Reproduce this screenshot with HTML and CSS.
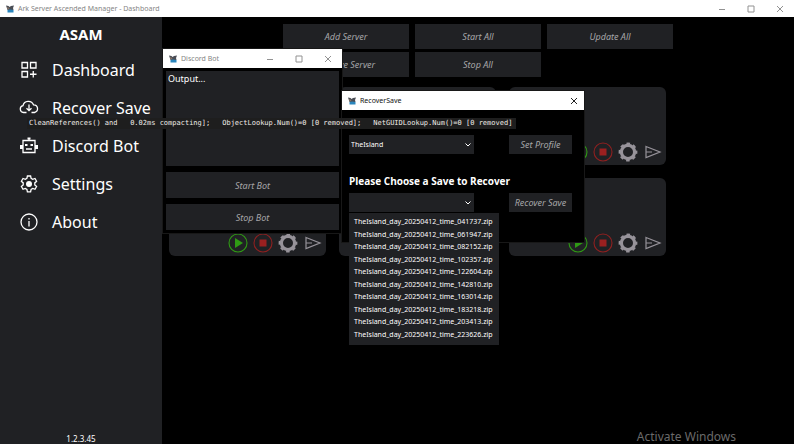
FILE: index.html
```
<!DOCTYPE html>
<html lang="en">
<head>
  <title>Ark Server Ascended Manager - Dashboard</title>
  <meta charset="utf-8">
  <link rel="stylesheet" href="styles.css">
</head>
<body>
  <!-- shared icons -->
  <svg class="sprite" aria-hidden="true">
    <symbol id="logo" viewBox="0 0 16 16">
      <path fill="#4a4d55" d="M0 1l5 1 2 2 3-2 6-1-2 5 1 4H3L2 7z"/>
      <path fill="#8a7668" d="M2 4l5 2-2 3-2-1z"/>
      <path fill="#2b86bd" d="M3 10l5-1 7 1v5H3z"/>
    </symbol>
    <symbol id="win-min" viewBox="0 0 8 8"><path d="M1 4.5h6"/></symbol>
    <symbol id="win-max" viewBox="0 0 8 8"><path d="M1 1h6v6H1z"/></symbol>
    <symbol id="win-close" viewBox="0 0 8 8"><path d="M1 1l6 6M7 1L1 7"/></symbol>
    <symbol id="chevron" viewBox="0 0 8 8"><path d="M1.500 2.500L4 5l2.500-2.500"/></symbol>
    <symbol id="play" viewBox="0 0 20 20">
      <circle cx="10" cy="10" r="9" fill="none" stroke="#2f9a14" stroke-width="1.100"/>
      <path fill="#2f9a14" d="M7 5l8 5-8 5z"/>
    </symbol>
    <symbol id="stop" viewBox="0 0 20 20">
      <circle cx="10" cy="10" r="9" fill="none" stroke="#8f2020" stroke-width="1.100"/>
      <path fill="#9c2020" d="M6.500 6.500h7v7h-7z"/>
    </symbol>
    <symbol id="gear" viewBox="0 0 20 20">
      <circle cx="10" cy="10" r="6.600" fill="none" stroke="#97939a" stroke-width="3.200"/>
      <circle cx="10" cy="10" r="8.400" fill="none" stroke="#97939a" stroke-width="2" stroke-dasharray="3.600 2.998" stroke-dashoffset="1.800"/>
    </symbol>
    <symbol id="send" viewBox="0 0 20 20">
      <path fill="none" stroke="#97939a" stroke-width="1.200" d="M3 4.500L17 10 3 15.500zM3 10h6"/>
    </symbol>
  </svg>

  <div class="app">
    <header class="titlebar main-titlebar">
      <svg class="logo"><use href="#logo"/></svg>
      <span class="title">Ark Server Ascended Manager - Dashboard</span>
      <div class="window-controls">
        <button aria-label="Minimize"><svg><use href="#win-min"/></svg></button>
        <button aria-label="Maximize"><svg><use href="#win-max"/></svg></button>
        <button aria-label="Close"><svg><use href="#win-close"/></svg></button>
      </div>
    </header>

    <div class="content">
      <aside class="sidebar">
        <h1>ASAM</h1>
        <nav>
          <a href="#dashboard">
            <svg viewBox="0 0 20 20"><path d="M3 2.500h5.500V8H3zM11.500 2.500H17V8h-5.500zM3 11.500h5.500V17H3zM14.250 11v6.500M11 14.250h6.500"/></svg>
            Dashboard
          </a>
          <a href="#recover">
            <svg viewBox="0 0 20 20"><path d="M7.500 14.500H4.500a3.500 3.500 0 0 1-.5-6.900 5.500 5.500 0 0 1 10.500-.8 3.900 3.900 0 0 1 1 7.700h-3M10 6.500v6M7.500 10.200L10 12.700l2.500-2.500"/></svg>
            Recover Save
          </a>
          <a href="#discord">
            <svg viewBox="0 0 20 20"><path d="M4 4.500h12v12H4zM10 4.500V2.500M7 13h6"/><path class="solid" d="M8.500 1.500h3v2h-3zM1 9h3v4H1zM16 9h3v4h-3zM6 8h2.500v2H6zM11.500 8H14v2h-2.500z"/></svg>
            Discord Bot
          </a>
          <a href="#settings">
            <svg viewBox="0 0 20 20"><path d="M8.400 2h3.200l.5 2.400 1.600.9 2.300-.8 1.600 2.800-1.800 1.600v2l1.800 1.600-1.600 2.800-2.300-.8-1.600.9-.5 2.400H8.400l-.5-2.400-1.600-.9-2.300.8-1.600-2.800 1.800-1.600v-2L2.400 7.300 4 4.500l2.300.8 1.600-.9z"/><circle class="solid" cx="10" cy="10" r="3"/></svg>
            Settings
          </a>
          <a href="#about">
            <svg viewBox="0 0 20 20"><circle cx="10" cy="10" r="8"/><path d="M10 9v5.500M10 6v1.500"/></svg>
            About
          </a>
        </nav>
        <footer>1.2.3.45</footer>
      </aside>

      <main class="dashboard">
        <div class="actions">
          <button>Add Server</button>
          <button>Start All</button>
          <button>Update All</button>
          <button>Remove Server</button>
          <button>Stop All</button>
        </div>
        <div class="servers">
          <section class="server">
            <button aria-label="Start"><svg><use href="#play"/></svg></button>
            <button aria-label="Stop"><svg><use href="#stop"/></svg></button>
            <button aria-label="Settings"><svg><use href="#gear"/></svg></button>
            <button aria-label="Send"><svg><use href="#send"/></svg></button>
          </section>
          <section class="server">
            <button aria-label="Start"><svg><use href="#play"/></svg></button>
            <button aria-label="Stop"><svg><use href="#stop"/></svg></button>
            <button aria-label="Settings"><svg><use href="#gear"/></svg></button>
            <button aria-label="Send"><svg><use href="#send"/></svg></button>
          </section>
          <section class="server">
            <button aria-label="Start"><svg><use href="#play"/></svg></button>
            <button aria-label="Stop"><svg><use href="#stop"/></svg></button>
            <button aria-label="Settings"><svg><use href="#gear"/></svg></button>
            <button aria-label="Send"><svg><use href="#send"/></svg></button>
          </section>
          <section class="server">
            <button aria-label="Start"><svg><use href="#play"/></svg></button>
            <button aria-label="Stop"><svg><use href="#stop"/></svg></button>
            <button aria-label="Settings"><svg><use href="#gear"/></svg></button>
            <button aria-label="Send"><svg><use href="#send"/></svg></button>
          </section>
          <section class="server">
            <button aria-label="Start"><svg><use href="#play"/></svg></button>
            <button aria-label="Stop"><svg><use href="#stop"/></svg></button>
            <button aria-label="Settings"><svg><use href="#gear"/></svg></button>
            <button aria-label="Send"><svg><use href="#send"/></svg></button>
          </section>
          <section class="server">
            <button aria-label="Start"><svg><use href="#play"/></svg></button>
            <button aria-label="Stop"><svg><use href="#stop"/></svg></button>
            <button aria-label="Settings"><svg><use href="#gear"/></svg></button>
            <button aria-label="Send"><svg><use href="#send"/></svg></button>
          </section>
        </div>
      </main>
    </div>
  </div>

  <div class="window bot-window">
    <header class="titlebar">
      <svg class="logo"><use href="#logo"/></svg>
      <span class="title">Discord Bot</span>
      <div class="window-controls">
        <button aria-label="Minimize"><svg><use href="#win-min"/></svg></button>
        <button aria-label="Maximize"><svg><use href="#win-max"/></svg></button>
        <button aria-label="Close"><svg><use href="#win-close"/></svg></button>
      </div>
    </header>
    <div class="bot-body">
      <textarea class="output" aria-label="Bot output" readonly>Output...</textarea>
      <button>Start Bot</button>
      <button>Stop Bot</button>
    </div>
  </div>

  <div class="window recover-window">
    <header class="titlebar active">
      <svg class="logo"><use href="#logo"/></svg>
      <span class="title">RecoverSave</span>
      <div class="window-controls">
        <button aria-label="Close"><svg><use href="#win-close"/></svg></button>
      </div>
    </header>
    <div class="recover-body">
      <div class="row">
        <div class="select">
          <select aria-label="Profile">
            <option>TheIsland</option>
          </select>
          <svg><use href="#chevron"/></svg>
        </div>
        <button>Set Profile</button>
      </div>
      <label for="save">Please Choose a Save to Recover</label>
      <div class="row">
        <div class="select">
          <select id="save">
            <option></option>
          </select>
          <svg><use href="#chevron"/></svg>
          <ul class="menu">
            <li>TheIsland_day_20250412_time_041737.zip</li>
            <li>TheIsland_day_20250412_time_061947.zip</li>
            <li>TheIsland_day_20250412_time_082152.zip</li>
            <li>TheIsland_day_20250412_time_102357.zip</li>
            <li>TheIsland_day_20250412_time_122604.zip</li>
            <li>TheIsland_day_20250412_time_142810.zip</li>
            <li>TheIsland_day_20250412_time_163014.zip</li>
            <li>TheIsland_day_20250412_time_183218.zip</li>
            <li>TheIsland_day_20250412_time_203413.zip</li>
            <li>TheIsland_day_20250412_time_223626.zip</li>
          </ul>
        </div>
        <button>Recover Save</button>
      </div>
    </div>
  </div>

  <div class="log">
    <span>CleanReferences() and   0.02ms compacting];</span>
    <span>ObjectLookup.Num()=0 [0 removed];</span>
    <span>NetGUIDLookup.Num()=0 [0 removed]</span>
  </div>

  <div class="watermark">Activate Windows</div>
</body>
</html>
```

FILE: styles.css
```
* {
  box-sizing: border-box;
}

body {
  margin: 0;
  background: #000;
  color: #fff;
  font-family: "Noto Sans", sans-serif;
  font-size: 7px;
  overflow: hidden;
}

button {
  border: none;
  padding: 0;
  background: #202124;
  color: #a6a6a8;
  font-family: inherit;
  font-size: 9px;
  font-style: italic;
  white-space: nowrap;
  cursor: pointer;
}

svg {
  display: block;
}

.sprite {
  position: absolute;
  width: 0;
  height: 0;
}

.app {
  display: flex;
  flex-direction: column;
  height: 100vh;
}

/* Title bars */
.titlebar {
  display: flex;
  align-items: center;
  height: 19px;
  padding: 0 6px;
  background: #fff;
  color: #858585;
}

.titlebar.active {
  padding-right: 2px;
  color: #111;
}

.main-titlebar {
  height: 17px;
}

.logo {
  width: 8px;
  height: 8px;
  margin-right: 4px;
}

.window-controls {
  display: flex;
  gap: 12px;
  margin-left: auto;
}

.window-controls button {
  display: flex;
  justify-content: center;
  width: 17px;
  background: none;
}

.window-controls svg {
  width: 8px;
  height: 8px;
  fill: none;
  stroke: #929292;
}

.active .window-controls svg {
  stroke: #222;
}

/* Sidebar */
.content {
  display: flex;
  flex: 1;
}

.sidebar {
  display: flex;
  flex-direction: column;
  width: 162px;
  padding-top: 7px;
  background: #202124;
}

.sidebar h1 {
  margin: 0 0 14px;
  font-size: 15px;
  line-height: 20px;
  text-align: center;
}

.sidebar nav {
  display: flex;
  flex-direction: column;
  gap: 14px;
}

.sidebar a {
  display: flex;
  align-items: center;
  gap: 13px;
  padding-left: 19px;
  font-size: 16px;
  line-height: 24px;
  color: #fff;
  text-decoration: none;
  white-space: nowrap;
}

.sidebar a svg {
  width: 20px;
  height: 20px;
  fill: none;
  stroke: #fff;
  stroke-width: 1.3;
}

.sidebar .solid {
  fill: #fff;
  stroke: none;
}

.sidebar footer {
  margin-top: auto;
  font-size: 8px;
  line-height: 10px;
  text-align: center;
}

/* Dashboard */
.dashboard {
  flex: 1;
  padding: 7px;
}

.actions {
  display: grid;
  grid-template-columns: repeat(3, 126px);
  justify-content: center;
  gap: 3px 6px;
}

.actions button {
  height: 25px;
}

.servers {
  display: grid;
  grid-template-columns: repeat(3, 157px);
  gap: 13px;
  margin-top: 10px;
}

.server {
  display: flex;
  justify-content: flex-end;
  align-items: flex-end;
  gap: 5px;
  height: 78px;
  padding: 3px;
  border-radius: 6px;
  background: #202124;
}

.server button {
  background: none;
}

.server svg {
  width: 20px;
  height: 20px;
}

/* Floating windows */
.window {
  position: absolute;
  background: #000;
  box-shadow: 0 0 0 1px #181818;
}

.bot-window {
  left: 163px;
  top: 49px;
  width: 179px;
}

.bot-body {
  display: flex;
  flex-direction: column;
  gap: 6px;
  padding: 3px;
}

.bot-body button {
  height: 26px;
}

.output {
  height: 95px;
  padding: 1px 2px;
  border: none;
  outline: none;
  resize: none;
  background: #202124;
  color: #fff;
  font-family: inherit;
  font-size: 9px;
  line-height: 14px;
}

.recover-window {
  left: 342px;
  top: 91px;
  width: 242px;
}

.recover-body {
  padding: 25px 12px 30px 7px;
}

.recover-body label {
  display: block;
  margin: 20px 0 5px;
  font-family: "Open Sans", sans-serif;
  font-size: 10px;
  font-weight: bold;
  line-height: 14px;
}

.row {
  display: flex;
  justify-content: space-between;
}

.row button {
  width: 63px;
  height: 19px;
}

.select {
  position: relative;
  display: flex;
  align-items: center;
  justify-content: flex-end;
  width: 125px;
  background: #202124;
}

.select select {
  width: 100%;
  height: 19px;
  padding: 0 2px;
  border: none;
  appearance: none;
  background: none;
  color: #fff;
  font-family: inherit;
  font-size: 7px;
}

.select svg {
  flex: none;
  width: 8px;
  height: 8px;
  margin: 0 2px 0 -10px;
  fill: none;
  stroke: #fff;
  pointer-events: none;
}

.menu {
  position: absolute;
  top: 20px;
  left: 0;
  display: flex;
  flex-direction: column;
  justify-content: space-between;
  width: 150px;
  height: 132px;
  margin: 0;
  padding: 3px 5px 4px;
  background: #202124;
  list-style: none;
  line-height: 12px;
  white-space: nowrap;
}

/* Console line drawn over everything */
.log {
  position: absolute;
  left: 27px;
  top: 118px;
  display: flex;
  gap: 12px;
  padding: 0 4px 0 2px;
  background: #1e1e1e;
  color: #f0ece8;
  font-family: "DejaVu Sans Mono", monospace;
  font-size: 7px;
  line-height: 11px;
  white-space: pre;
}

.watermark {
  position: absolute;
  right: 58px;
  bottom: 0;
  color: #6a6a6a;
  font-size: 12px;
  line-height: 15px;
}
```
